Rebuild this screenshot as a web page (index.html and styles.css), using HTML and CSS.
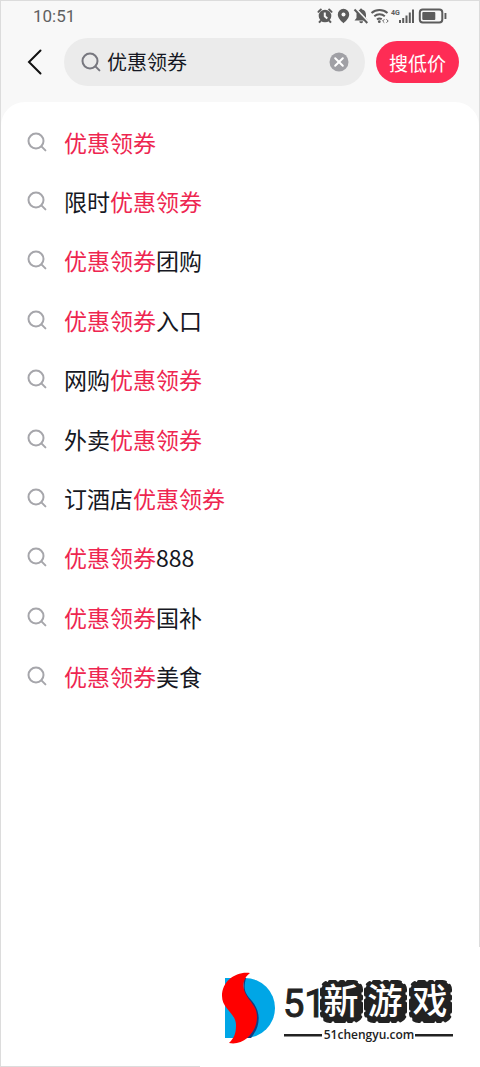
FILE: index.html
```html
<!DOCTYPE html>
<html lang="zh-CN">
<head>
<meta charset="utf-8">
<meta name="viewport" content="width=device-width, initial-scale=1">
<title>优惠领券</title>
<link rel="stylesheet" href="styles.css">
</head>
<body>
<svg class="defs" aria-hidden="true">
  <symbol id="search" viewBox="0 0 20 20">
    <circle cx="9" cy="9" r="7.500"/><path d="M14.400 14.400 18.400 18.400"/>
  </symbol>
</svg>
<div class="screen">
  <header class="top">
    <div class="status">
      <time class="clock">10:51</time>
      <svg class="indicators" viewBox="0 0 132 18" aria-hidden="true">
        <g class="solid">
          <circle cx="8" cy="9" r="6.300"/>
          <path d="M1 5.500a12 12 0 0 1 3.500-3.500M11.500 2a12 12 0 0 1 3.500 3.500M4 13.500 2 15.700M12 13.500 14 15.700" class="line"/>
          <path d="M7.800 5.500V9.300L10.300 11.500" class="cut"/>
          <path d="M26.500 1.800a5.700 5.700 0 0 0-5.700 5.700C20.800 11 24 14 26.500 16.200 29 14 32.200 11 32.200 7.500A5.700 5.700 0 0 0 26.500 1.800Z"/>
          <circle cx="26.500" cy="7.500" r="2" class="hole"/>
          <path d="M44 1.500a1.200 1.200 0 0 1 1.200 1C48 3.300 49 5.500 49 8V11l2 2.500H37.500L39.500 11V7.500C39.500 5 41 3 43 2.500a1.200 1.200 0 0 1 1-1ZM42.300 14.300h3.800a1.900 1.900 0 0 1-3.800 0Z"/>
          <path d="M38.500 1.500 51.500 15" class="cut"/>
          <path d="M37.500 2.500 50.300 16" class="line"/>
        </g>
        <g class="line">
          <path d="M54.500 6a12 12 0 0 1 16 0M57.300 9.300a8 8 0 0 1 10.500 0M60 12.500a4 4 0 0 1 4.800-.300"/>
          <path d="M67.300 12.300 65.600 14 67.300 15.700M69.500 12.300 71.200 14 69.500 15.700" class="thin"/>
        </g>
        <circle cx="62.300" cy="14.700" r="1.400" class="solid"/>
        <text x="74" y="8" class="net">4G</text>
        <path class="solid" d="M82 13h2v3h-2zM85.200 11h2v5h-2zM88.500 8.500h2V16h-2zM91.800 5.500h2V16h-2zM95 2.500h2V16h-2z"/>
        <rect x="102.800" y="2.500" width="22.500" height="13" rx="3" class="shell"/>
        <rect x="105.300" y="5" width="13" height="8" rx="1" class="solid"/>
        <path class="solid" d="M127.500 6h1.900v6h-1.900z"/>
      </svg>
    </div>
    <form class="bar" role="search">
      <button class="back" type="button" aria-label="返回">
        <svg viewBox="0 0 16 26"><path d="M13.500 1.500 2 13 13.500 24.500"/></svg>
      </button>
      <div class="field">
        <svg class="icon"><use href="#search"/></svg>
        <input class="query" type="text" aria-label="搜索" value="优惠领券">
        <button class="clear" type="button" aria-label="清除">
          <svg viewBox="0 0 20 20"><circle cx="10" cy="10" r="9.500"/><path d="M6.200 6.200 13.800 13.800M13.800 6.200 6.200 13.800"/></svg>
        </button>
      </div>
      <button class="submit" type="button">搜低价</button>
    </form>
  </header>
  <main class="panel">
    <ul class="list">
      <li><a class="item" href="#"><svg class="icon"><use href="#search"/></svg><span><em>优惠领券</em></span></a></li>
      <li><a class="item" href="#"><svg class="icon"><use href="#search"/></svg><span>限时<em>优惠领券</em></span></a></li>
      <li><a class="item" href="#"><svg class="icon"><use href="#search"/></svg><span><em>优惠领券</em>团购</span></a></li>
      <li><a class="item" href="#"><svg class="icon"><use href="#search"/></svg><span><em>优惠领券</em>入口</span></a></li>
      <li><a class="item" href="#"><svg class="icon"><use href="#search"/></svg><span>网购<em>优惠领券</em></span></a></li>
      <li><a class="item" href="#"><svg class="icon"><use href="#search"/></svg><span>外卖<em>优惠领券</em></span></a></li>
      <li><a class="item" href="#"><svg class="icon"><use href="#search"/></svg><span>订酒店<em>优惠领券</em></span></a></li>
      <li><a class="item" href="#"><svg class="icon"><use href="#search"/></svg><span><em>优惠领券</em>888</span></a></li>
      <li><a class="item" href="#"><svg class="icon"><use href="#search"/></svg><span><em>优惠领券</em>国补</span></a></li>
      <li><a class="item" href="#"><svg class="icon"><use href="#search"/></svg><span><em>优惠领券</em>美食</span></a></li>
    </ul>
  </main>
  <div class="watermark">
    <svg viewBox="0 0 280 120" role="img" aria-label="51新游戏 51chengyu.com">
      <path fill="#00a6e6" d="M25 31H45A30 30 0 0 1 45 91H25Z"/>
      <path fill="#143c82" d="M46 31C43 43 45 46 52 54C62 66 60 80 51 91H44V31Z"/>
      <path fill="#f00" d="M50 26C36 24 22 34 22 49C22 62 36 66 36 78C36 87 34 91 29 96C43 99 57 86 57 70C57 56 44 52 43.500 39C43.500 33 46 29 50 26Z"/>
      <g class="tiles">
        <rect x="121.500" y="34.500" width="40" height="40" rx="8"/>
        <rect x="165.500" y="34.500" width="40" height="40" rx="8"/>
        <rect x="210.500" y="34.500" width="40" height="40" rx="8"/>
      </g>
      <text x="83" y="70" class="num">51</text>
      <g class="word">
        <text x="141" y="67">新</text><text x="185" y="67">游</text><text x="230" y="67">戏</text>
      </g>
      <path fill="#222" d="M84 87h38v2.500H84zM215 87h38v2.500h-38z"/>
      <text x="169" y="92" class="site">51chengyu.com</text>
    </svg>
  </div>
</div>
</body>
</html>
```
FILE: styles.css
```css
* { box-sizing: border-box; }
body {
  margin: 0;
  font-family: "Noto Sans CJK SC", sans-serif;
  color: #161823;
  background: #f8f8f8;
}
button {
  border: 0;
  padding: 0;
  background: none;
  font: inherit;
}
svg { display: block; }
.defs {
  position: absolute;
  width: 0;
  height: 0;
}
.screen {
  position: relative;
  display: flex;
  flex-direction: column;
  min-height: 100vh;
  border: 1px solid #dcdcdc;
}
.top { padding-bottom: 16px; }
.status {
  display: flex;
  align-items: center;
  justify-content: space-between;
  height: 29px;
  padding: 0 30px 0 32px;
}
.clock {
  font: 17px/20px Roboto, sans-serif;
  color: #606060;
}
.indicators {
  width: 132px;
  height: 18px;
}
.solid { fill: #5c5c5c; }
.line {
  fill: none;
  stroke: #5c5c5c;
  stroke-width: 2;
}
.thin { stroke-width: 1; }
.cut {
  fill: none;
  stroke: #f8f8f8;
  stroke-width: 2;
}
.hole { fill: #f8f8f8; }
.shell {
  fill: none;
  stroke: #5c5c5c;
  stroke-width: 2;
}
.net {
  font: bold 7px Roboto, sans-serif;
  fill: #5c5c5c;
}
.bar {
  display: flex;
  align-items: center;
  margin: 8px 20px 0 26px;
}
.back {
  flex: none;
  width: 37px;
}
.back svg {
  width: 16px;
  height: 26px;
  fill: none;
  stroke: #111;
  stroke-width: 2;
  stroke-linecap: round;
}
.icon {
  flex: none;
  width: 20px;
  height: 20px;
  fill: none;
  stroke: #a6a6ab;
  stroke-width: 2;
  stroke-linecap: round;
}
.field {
  flex: 1;
  display: flex;
  align-items: center;
  gap: 6px;
  min-width: 0;
  height: 48px;
  padding: 0 16px 0 17px;
  border-radius: 24px;
  background: #ebebeb;
}
.field .icon { stroke: #77777f; }
.query {
  flex: 1;
  min-width: 0;
  padding: 0;
  border: 0;
  outline: 0;
  background: none;
  font: 20px/28px "Noto Sans CJK SC", sans-serif;
  color: #161823;
}
.clear svg {
  width: 20px;
  height: 20px;
  fill: #a0a0a5;
}
.clear path {
  stroke: #fff;
  stroke-width: 2;
  stroke-linecap: round;
}
.submit {
  flex: none;
  height: 42px;
  margin-left: 11px;
  padding: 0 13px;
  border-radius: 21px;
  background: #fe2c55;
  font-size: 19px;
  color: #fff;
}
.panel {
  flex: 1;
  padding: 10px 0;
  border-radius: 24px 24px 0 0;
  background: #fff;
}
.list {
  display: grid;
  grid-auto-rows: 1fr;
  min-height: 594px;
  margin: 0;
  padding: 0;
  list-style: none;
}
.item {
  display: flex;
  align-items: center;
  gap: 17px;
  height: 100%;
  padding: 0 26px;
  font-size: 23px;
  line-height: 32px;
  color: #161823;
  text-decoration: none;
}
.item em {
  font-style: normal;
  color: #ee2650;
}
.watermark {
  position: absolute;
  right: -1px;
  bottom: -1px;
  width: 280px;
  background: #fff;
}
.tiles {
  fill: #222;
  stroke: #222;
  stroke-width: 3;
  stroke-linecap: round;
  stroke-dasharray: 6 5 3 4 9 5;
}
.num {
  font: 38px Roboto, sans-serif;
  fill: #222;
  stroke: #222;
  stroke-width: 1;
}
.word {
  font: 500 35px "Noto Sans CJK SC", sans-serif;
  text-anchor: middle;
  fill: #fff;
}
.site {
  font: 600 12px "Open Sans", sans-serif;
  text-anchor: middle;
  fill: #222;
}
```
